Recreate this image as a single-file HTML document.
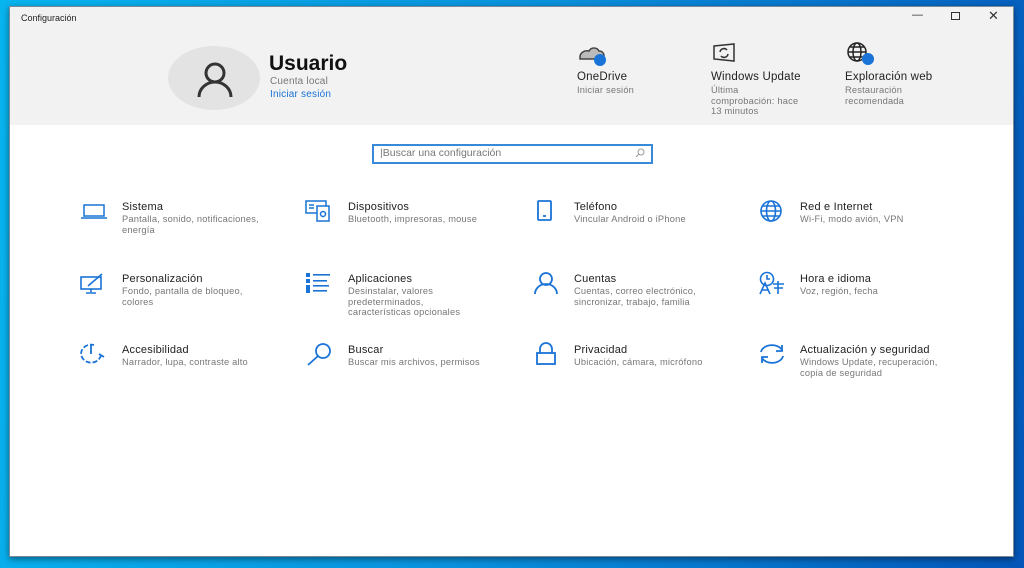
<!DOCTYPE html>
<html><head><meta charset="utf-8"><style>
*{margin:0;padding:0;box-sizing:border-box}
body{width:1024px;height:568px;overflow:hidden;position:relative;font-family:"Liberation Sans",sans-serif;background:linear-gradient(100deg,#08b4ee 0%,#0a90dc 50%,#0456b8 100%)}
.win{position:absolute;left:9px;top:6px;width:1005px;height:551px;background:#fff;box-shadow:0 2px 6px rgba(0,0,0,.45);border:1px solid #7a8a9a}
.hdr{position:absolute;left:0;top:0;width:100%;height:118px;background:#f2f2f2}
.t{position:absolute;white-space:nowrap}
.title{font-size:9px;color:#222;left:11px;top:6px}
.av{position:absolute;left:158px;top:39px;width:92px;height:64px;border-radius:50%;background:#e3e3e3}
.h{font-size:11px;color:#222;letter-spacing:0.2px}
.s{font-size:9.3px;color:#777;line-height:10.5px;letter-spacing:0.2px}
.b{color:#1a73d6}
.srch{position:absolute;left:362px;top:137px;width:281px;height:20px;border:2px solid #3a88d8;background:#fff}
.ic{position:absolute}
</style></head><body>
<div class="win">
<div class="hdr"></div>
<div class="t title">Configuración</div>
<div class="t" style="left:902px;top:2px;font-size:11px;color:#333">—</div>
<div class="t" style="left:941px;top:5px;width:9px;height:8px;border:1px solid #333"></div>
<div class="t" style="left:978px;top:1px;font-size:13px;color:#333">✕</div>
<div class="av"></div>
<svg class="ic" style="left:185px;top:55px" width="40" height="36" viewBox="0 0 40 36" fill="none" stroke="#333" stroke-width="3"><circle cx="20" cy="11" r="9"/><path d="M4 35a16 15 0 0 1 32 0"/></svg>
<div class="t" style="left:259px;top:45px;font-size:21px;font-weight:bold;color:#111">Usuario</div>
<div class="t s" style="left:260px;top:70px;font-size:10px">Cuenta local</div>
<div class="t s b" style="left:260px;top:83px;font-size:10px">Iniciar sesión</div>

<svg class="ic" style="left:567px;top:36px" width="30" height="24" viewBox="0 0 30 24"><path d="M3 14c0-4 4-7 9-6 2-4 8-4 10 0 3 0 5 2 5 5v3H3z" fill="#bbb" stroke="#444" stroke-width="1.5"/><circle cx="23" cy="17" r="6" fill="#1a73d6"/></svg>
<div class="t h" style="left:567px;top:64px;font-size:11.5px">OneDrive</div>
<div class="t s" style="left:567px;top:78px">Iniciar sesión</div>

<svg class="ic" style="left:702px;top:36px" width="24" height="20" viewBox="0 0 24 20" fill="none" stroke="#333" stroke-width="1.5"><path d="M2 3l20-2v17l-20-2z"/><path d="M8 9a4 4 0 0 1 7-2M16 11a4 4 0 0 1-7 2"/></svg>
<div class="t h" style="left:701px;top:64px;font-size:11.5px">Windows Update</div>
<div class="t s" style="left:701px;top:78px">Última<br>comprobación: hace<br>13 minutos</div>

<svg class="ic" style="left:836px;top:34px" width="30" height="26" viewBox="0 0 30 26" fill="none" stroke="#222" stroke-width="1.5"><circle cx="11" cy="11" r="9"/><ellipse cx="11" cy="11" rx="4" ry="9"/><path d="M2 11h18M4 6h14M4 16h14"/><circle cx="22" cy="18" r="6" fill="#1a73d6" stroke="none"/></svg>
<div class="t h" style="left:835px;top:64px;font-size:11.5px">Exploración web</div>
<div class="t s" style="left:835px;top:78px">Restauración<br>recomendada</div>

<div class="srch"></div>
<div class="t" style="left:370px;top:140px;font-size:10.5px;color:#777">|Buscar una configuración</div>
<svg class="ic" style="left:625px;top:141px" width="10" height="10" viewBox="0 0 10 10" fill="none" stroke="#999"><circle cx="6" cy="4" r="3"/><path d="M4 6L1 9"/></svg>

<svg class="ic" style="left:70px;top:196px" width="28" height="18" viewBox="0 0 28 18" fill="none" stroke="#1a73d6" stroke-width="1.5"><rect x="4" y="2" width="20" height="11"/><path d="M1 15h26"/></svg>
<svg class="ic" style="left:295px;top:193px" width="28" height="22" viewBox="0 0 28 22" fill="none" stroke="#1a73d6" stroke-width="1.5"><rect x="1" y="1" width="20" height="12"/><rect x="12" y="6" width="12" height="15" fill="#fff"/><circle cx="18" cy="14" r="2.5"/><path d="M4 5h5M4 8h5"/></svg>
<svg class="ic" style="left:526px;top:193px" width="18" height="22" viewBox="0 0 18 22" fill="none" stroke="#1a73d6" stroke-width="1.8"><rect x="2" y="1" width="13" height="19" rx="1"/><path d="M7 16h3"/></svg>
<svg class="ic" style="left:748px;top:193px" width="28" height="22" viewBox="0 0 28 22" fill="none" stroke="#1a73d6" stroke-width="1.6"><circle cx="13" cy="11" r="10"/><ellipse cx="13" cy="11" rx="4.5" ry="10"/><path d="M3 11h20M5 6h16M5 16h16"/></svg>

<svg class="ic" style="left:69px;top:265px" width="28" height="22" viewBox="0 0 28 22" fill="none" stroke="#1a73d6" stroke-width="1.6"><rect x="2" y="5" width="20" height="12"/><path d="M12 17v3M7 21h10M9 14l14-12"/></svg>
<svg class="ic" style="left:295px;top:265px" width="28" height="22" viewBox="0 0 28 22" fill="#1a73d6"><rect x="1" y="1" width="4" height="4"/><rect x="1" y="7" width="4" height="4"/><rect x="1" y="13" width="4" height="4"/><rect x="1" y="17" width="4" height="4"/><rect x="8" y="2" width="17" height="1.6"/><rect x="8" y="8" width="14" height="1.6"/><rect x="8" y="13" width="16" height="1.6"/><rect x="8" y="18" width="14" height="1.6"/></svg>
<svg class="ic" style="left:523px;top:264px" width="26" height="24" viewBox="0 0 26 24" fill="none" stroke="#1a73d6" stroke-width="1.8"><circle cx="13" cy="8" r="6"/><path d="M2 23a11 10 0 0 1 22 0"/></svg>
<svg class="ic" style="left:748px;top:264px" width="28" height="24" viewBox="0 0 28 24" fill="none" stroke="#1a73d6" stroke-width="1.6"><circle cx="9" cy="8" r="6.5"/><path d="M9 4v4h3M2 23l5-11 5 11M4 19h6M15 13h11M20 10v13M16 17h9"/></svg>

<svg class="ic" style="left:69px;top:335px" width="28" height="22" viewBox="0 0 28 22" fill="none" stroke="#1a73d6" stroke-width="1.8" stroke-dasharray="5 2"><path d="M22 13a10 9 0 1 1-7-10"/><path d="M12 3v9" stroke-dasharray="none"/><path d="M20 12l5 3" stroke-dasharray="none"/></svg>
<svg class="ic" style="left:296px;top:335px" width="28" height="24" viewBox="0 0 28 24" fill="none" stroke="#1a73d6" stroke-width="1.8"><circle cx="17" cy="9" r="7"/><path d="M12 14l-10 9"/></svg>
<svg class="ic" style="left:525px;top:335px" width="22" height="24" viewBox="0 0 22 24" fill="none" stroke="#1a73d6" stroke-width="1.8"><path d="M5 11V7a6 6 0 0 1 12 0v4"/><rect x="2" y="11" width="18" height="11"/></svg>
<svg class="ic" style="left:748px;top:335px" width="28" height="24" viewBox="0 0 28 24" fill="none" stroke="#1a73d6" stroke-width="1.8"><path d="M3 10a11 8 0 0 1 21-2M25 14a11 8 0 0 1-21 2"/><path d="M24 3v6h-6M4 21v-6h6"/></svg>

<div class="t h" style="left:112px;top:194px">Sistema</div>
<div class="t s" style="left:112px;top:207px">Pantalla, sonido, notificaciones,<br>energía</div>
<div class="t h" style="left:338px;top:194px">Dispositivos</div>
<div class="t s" style="left:338px;top:207px">Bluetooth, impresoras, mouse</div>
<div class="t h" style="left:564px;top:194px">Teléfono</div>
<div class="t s" style="left:564px;top:207px">Vincular Android o iPhone</div>
<div class="t h" style="left:790px;top:194px">Red e Internet</div>
<div class="t s" style="left:790px;top:207px">Wi-Fi, modo avión, VPN</div>

<div class="t h" style="left:112px;top:266px">Personalización</div>
<div class="t s" style="left:112px;top:279px">Fondo, pantalla de bloqueo,<br>colores</div>
<div class="t h" style="left:338px;top:266px">Aplicaciones</div>
<div class="t s" style="left:338px;top:279px">Desinstalar, valores<br>predeterminados,<br>características opcionales</div>
<div class="t h" style="left:564px;top:266px">Cuentas</div>
<div class="t s" style="left:564px;top:279px">Cuentas, correo electrónico,<br>sincronizar, trabajo, familia</div>
<div class="t h" style="left:790px;top:266px">Hora e idioma</div>
<div class="t s" style="left:790px;top:279px">Voz, región, fecha</div>

<div class="t h" style="left:112px;top:337px">Accesibilidad</div>
<div class="t s" style="left:112px;top:350px">Narrador, lupa, contraste alto</div>
<div class="t h" style="left:338px;top:337px">Buscar</div>
<div class="t s" style="left:338px;top:350px">Buscar mis archivos, permisos</div>
<div class="t h" style="left:564px;top:337px">Privacidad</div>
<div class="t s" style="left:564px;top:350px">Ubicación, cámara, micrófono</div>
<div class="t h" style="left:790px;top:337px">Actualización y seguridad</div>
<div class="t s" style="left:790px;top:350px">Windows Update, recuperación,<br>copia de seguridad</div>
</div>
</body></html>
